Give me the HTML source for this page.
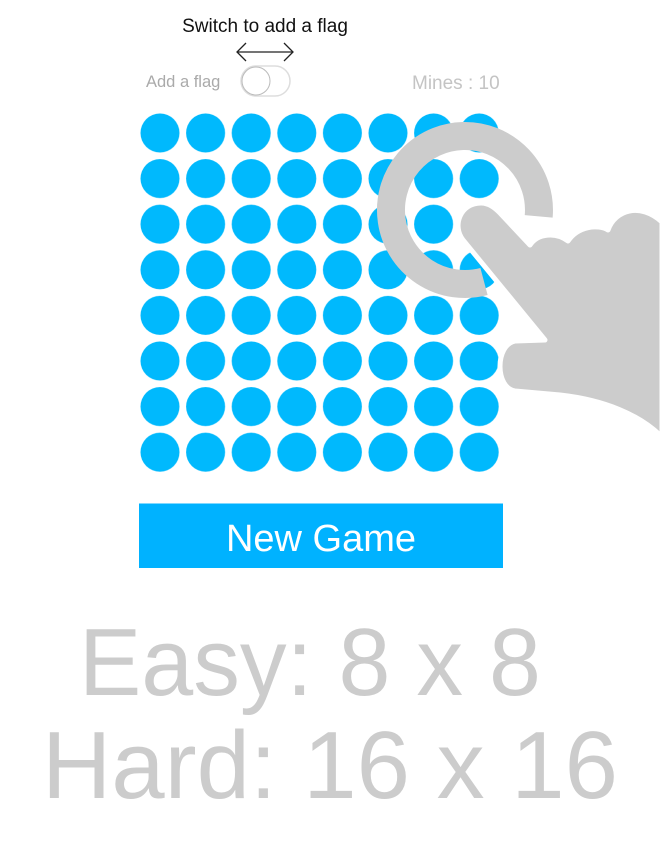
<!DOCTYPE html>
<html><head><meta charset="utf-8"><style>
html,body{margin:0;padding:0;background:#fff;width:662px;height:844px;overflow:hidden}
svg{display:block}
</style></head><body>
<svg width="662" height="844" viewBox="0 0 662 844" xmlns="http://www.w3.org/2000/svg">
<defs>
<pattern id="p" x="137.5" y="110.5" width="45.6" height="45.6" patternUnits="userSpaceOnUse">
<circle cx="22.5" cy="22.5" r="19.5" fill="#00b9fd"/>
</pattern>
</defs>
<text x="265" y="32" font-family="Liberation Sans, sans-serif" font-size="19" fill="#111" text-anchor="middle">Switch to add a flag</text>
<g stroke="#222" stroke-width="1.3" fill="none">
<line x1="237" y1="52" x2="293" y2="52"/>
<polyline points="246,43 237,52 246,61"/>
<polyline points="284,43 293,52 284,61"/>
</g>
<text x="146" y="87" font-family="Liberation Sans, sans-serif" font-size="16.5" fill="#aaa">Add a flag</text>
<rect x="241" y="66" width="49" height="30" rx="15" fill="#fff" stroke="#ddd" stroke-width="1.5"/>
<circle cx="256" cy="81" r="14" fill="#fff" stroke="#bbb" stroke-width="1"/>
<text x="412" y="89" font-family="Liberation Sans, sans-serif" font-size="19" fill="#c4c4c4">Mines : 10</text>
<rect x="138" y="111" width="366" height="365" fill="url(#p)"/>
<path d="M538.7 216.4 A74 74 0 1 0 484 281.5" stroke="#cccccc" stroke-width="28" fill="none"/>
<path d="M463 240 C452 226 460 203 481 203 C489 203 495 208 500 213 L530 245 C538 233 556 232 568 241 C578 226 598 224 608 230 C615 210 640 202 662 222 L662 437 C640 415 605 400 560 395 L515 391 C495 388 495 345 515 341 L545 340 Z" fill="#cccccc" stroke="#fff" stroke-width="5" stroke-linejoin="round"/>
<rect x="139" y="503.5" width="364" height="64.5" fill="#00b2ff"/>
<text x="321" y="551" font-family="Liberation Sans, sans-serif" font-size="38" fill="#fff" text-anchor="middle">New Game</text>
<text x="310" y="695" font-family="Liberation Sans, sans-serif" font-size="96" fill="#cccccc" text-anchor="middle" textLength="462" lengthAdjust="spacingAndGlyphs">Easy: 8 x 8</text>
<text x="330" y="798" font-family="Liberation Sans, sans-serif" font-size="96" fill="#cccccc" text-anchor="middle" textLength="576" lengthAdjust="spacingAndGlyphs">Hard: 16 x 16</text>
</svg>
</body></html>
